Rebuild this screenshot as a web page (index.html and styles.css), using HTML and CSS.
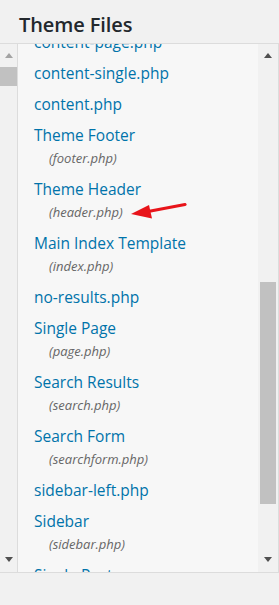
FILE: index.html
```html
<!DOCTYPE html>
<html>
<head>
<meta charset="utf-8">
<link rel="stylesheet" href="styles.css">
</head>
<body>
<h2 class="title">Theme Files</h2>
<div class="panel">
  <div class="sb sb-left">
    <span class="arrow up light"></span>
    <div class="track"><div class="thumb thumb-left"></div></div>
    <span class="arrow down"></span>
  </div>
  <div class="list-wrap">
    <ul class="files">
      <li><a>content-page.php</a></li>
      <li><a>content-single.php</a></li>
      <li><a>content.php</a></li>
      <li><a>Theme Footer</a><span class="fn">(footer.php)</span></li>
      <li class="marked"><a>Theme Header</a><span class="fn">(header.php)</span>
        <svg class="pointer" width="58" height="18" viewBox="0 0 58 18"><path d="M55 2.5 L18 9.5" stroke="#e8141a" stroke-width="3" stroke-linecap="round"/><path d="M1 12 L19 3 L22 16.5 Z" fill="#e8141a"/></svg>
      </li>
      <li><a>Main Index Template</a><span class="fn">(index.php)</span></li>
      <li><a>no-results.php</a></li>
      <li><a>Single Page</a><span class="fn">(page.php)</span></li>
      <li><a>Search Results</a><span class="fn">(search.php)</span></li>
      <li><a>Search Form</a><span class="fn">(searchform.php)</span></li>
      <li><a>sidebar-left.php</a></li>
      <li><a>Sidebar</a><span class="fn">(sidebar.php)</span></li>
      <li><a>Single Post</a><span class="fn">(single.php)</span></li>
    </ul>
  </div>
  <div class="sb sb-right">
    <span class="arrow up"></span>
    <div class="track"><div class="thumb thumb-right"></div></div>
    <span class="arrow down"></span>
  </div>
</div>
</body>
</html>
```
FILE: styles.css
```css
html, body { margin: 0; padding: 0; }
body {
  background: #f1f1f1;
  font-family: "Open Sans", "Noto Sans", sans-serif;
  width: 279px;
  height: 605px;
  overflow: hidden;
}
.title {
  margin: 0;
  padding: 11px 0 0 19px;
  height: 32px;
  font-size: 20px;
  font-weight: 600;
  color: #23282d;
  line-height: 27px;
  letter-spacing: -0.1px;
}
.panel {
  display: flex;
  height: 528px;
  border-top: 1px solid #dcdcdc;
  border-bottom: 1px solid #dcdcdc;
}
.sb {
  display: flex;
  flex-direction: column;
  align-items: center;
  background: #f1f1f1;
}
.sb-left { width: 17px; padding-top: 9px; }
.sb-right { width: 20px; border-right: 1px solid #dcdcdc; padding-top: 9px; }
.track { flex: 1; width: 100%; position: relative; margin: 4px 0; }
.thumb { position: absolute; background: #c1c1c1; }
.thumb-left { left: 0; right: 0; top: 5px; height: 19px; }
.thumb-right { left: 2px; right: 2px; top: 220px; height: 222px; }
.arrow { width: 0; height: 0; border-left: 4.5px solid transparent; border-right: 4.5px solid transparent; }
.arrow.up { border-bottom: 5px solid #505050; }
.arrow.up.light { border-bottom-color: #a3a3a3; }
.arrow.down { border-top: 5px solid #505050; margin-bottom: 10px; }
.list-wrap {
  flex: 1;
  background: #f7f7f7;
  border-left: 1px solid #dcdcdc;
  overflow: hidden;
}
.files {
  list-style: none;
  margin: -17px 0 0 0;
  padding: 0 0 0 16px;
}
.files li {
  padding: 4px 0;
  line-height: 23px;
  position: relative;
}
.files a {
  display: block;
  color: #0073aa;
  font-size: 15.5px;
}
.fn {
  display: block;
  padding-left: 15px;
  font-size: 13px;
  font-style: italic;
  color: #666;
}
.pointer {
  position: absolute;
  left: 96px;
  top: 28px;
}
```
